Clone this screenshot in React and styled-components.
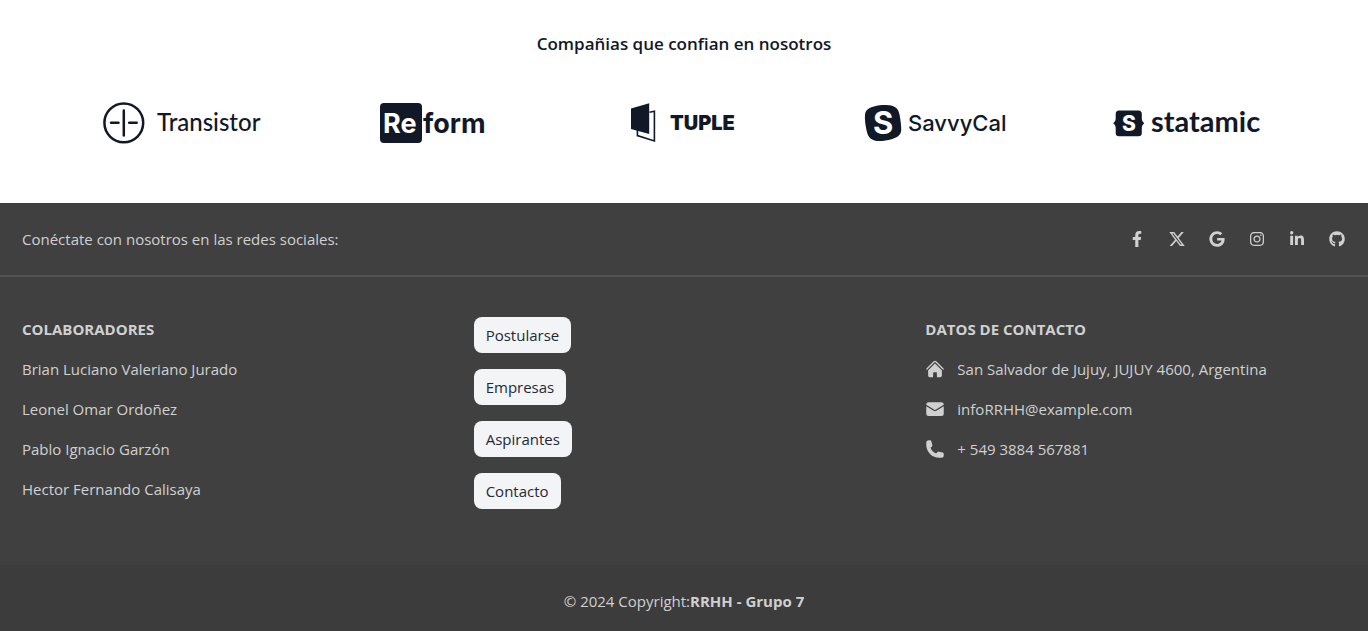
import React from "react";
import styled, { createGlobalStyle } from "styled-components";
import { FaFacebookF, FaGoogle, FaInstagram, FaLinkedinIn, FaGithub } from "react-icons/fa";

const GlobalStyle = createGlobalStyle`
  *, *::before, *::after { box-sizing: border-box; }
  body {
    margin: 0;
    background: #fff;
    font-family: "Segoe UI", "Open Sans", "Noto Sans", sans-serif;
    font-size: 15px;
    line-height: 24px;
  }
  h2, h6, p, ul { margin: 0; padding: 0; font-size: inherit; font-weight: inherit; }
  ul { list-style: none; }
  a { color: inherit; text-decoration: none; }
`;

const Companies = styled.section`
  padding: 28px 32px 56px;
`;

const CompaniesInner = styled.div`
  max-width: 1216px;
  margin: 0 auto;
`;

const CompaniesTitle = styled.h2`
  text-align: center;
  font-size: 17px;
  line-height: 32px;
  font-weight: 600;
  color: #111827;
`;

const LogoGrid = styled.div`
  display: grid;
  grid-template-columns: repeat(5, minmax(0, 1fr));
  gap: 40px;
  justify-items: center;
  margin-top: 39px;
`;

const Logo = styled.svg`
  display: block;
  width: 158px;
  height: 48px;
  fill: #111827;
`;

const Word = styled.text`
  font-family: ${(p) => p.$family || "Lato"}, sans-serif;
  font-weight: ${(p) => p.$weight};
  font-size: ${(p) => p.$size}px;
`;

const Footer = styled.footer`
  background: #404040;
  color: #d0d0d0;
`;

const SocialBar = styled.div`
  display: flex;
  align-items: center;
  justify-content: space-between;
  padding: 24px 22px;
  border-bottom: 2px solid #525252;
`;

const SocialLinks = styled.nav`
  display: flex;
  gap: 22px;
`;

const SocialLink = styled.a`
  display: flex;
  align-items: center;
  justify-content: center;
  width: 18px;
  height: 24px;

  svg { width: 16px; height: 16px; fill: currentColor; }
`;

const Columns = styled.div`
  display: grid;
  grid-template-columns: repeat(3, minmax(0, 1fr));
  gap: 32px;
  padding: 40px 23px 56px 22px;
`;

const ColumnTitle = styled.h6`
  margin-bottom: 16px;
  font-weight: 700;
  text-transform: uppercase;
`;

const Column = styled.div``;

const List = styled.ul`
  display: flex;
  flex-direction: column;
  align-items: flex-start;
  gap: 16px;
`;

const ContactItem = styled.li`
  display: flex;
  align-items: center;
  gap: 12px;

  svg { width: 20px; height: 20px; flex: none; fill: currentColor; }
`;

const NavButton = styled.button`
  display: block;
  border: 0;
  border-radius: 8px;
  padding: 6px 12px;
  background: #f3f4f6;
  color: #1f2937;
  font: inherit;
  cursor: pointer;
`;

const Copyright = styled.div`
  padding: 24px;
  background: #3c3c3c;
  text-align: center;

  a { font-weight: 700; }
`;

const XIcon = () => (
  <svg viewBox="16 16 480 480" aria-hidden="true">
    <path d="M389.2 48h70.6L305.6 224.2 487 464H345L233.7 318.6 106.5 464H35.8L200.7 275.5 26.8 48H172.4L272.9 180.9 389.2 48zM364.4 421.8h39.1L151.1 88h-42L364.4 421.8z" />
  </svg>
);

const HomeIcon = () => (
  <svg viewBox="0 0 24 24" aria-hidden="true">
    <path d="M11.47 3.84a.75.75 0 011.06 0l8.69 8.69a.75.75 0 101.06-1.06l-8.689-8.69a2.25 2.25 0 00-3.182 0l-8.69 8.69a.75.75 0 001.061 1.06l8.69-8.69z" />
    <path d="M12 5.432l8.159 8.159c.03.03.06.058.091.086v6.198c0 1.035-.84 1.875-1.875 1.875H15a.75.75 0 01-.75-.75v-4.5a.75.75 0 00-.75-.75h-3a.75.75 0 00-.75.75V21a.75.75 0 01-.75.75H5.625a1.875 1.875 0 01-1.875-1.875v-6.198a2.29 2.29 0 00.091-.086L12 5.43z" />
  </svg>
);

const MailIcon = () => (
  <svg viewBox="0 0 24 24" aria-hidden="true">
    <path d="M1.5 8.67v8.58a3 3 0 003 3h15a3 3 0 003-3V8.67l-8.928 5.493a3 3 0 01-3.144 0L1.5 8.67z" />
    <path d="M22.5 6.908V6.75a3 3 0 00-3-3h-15a3 3 0 00-3 3v.158l9.714 5.978a1.5 1.5 0 001.572 0L22.5 6.908z" />
  </svg>
);

const PhoneIcon = () => (
  <svg viewBox="0 0 24 24" aria-hidden="true">
    <path fillRule="evenodd" clipRule="evenodd" d="M1.5 4.5a3 3 0 013-3h1.372c.86 0 1.61.586 1.819 1.42l1.105 4.423a1.875 1.875 0 01-.694 1.955l-1.293.97c-.135.101-.164.249-.126.352a11.285 11.285 0 006.697 6.697c.103.038.25.009.352-.126l.97-1.293a1.875 1.875 0 011.955-.694l4.423 1.105c.834.209 1.42.959 1.42 1.82V19.5a3 3 0 01-3 3h-2.25C8.552 22.5 1.5 15.448 1.5 6.75V4.5z" />
  </svg>
);

const TransistorLogo = () => (
  <Logo viewBox="0 0 158 48" role="img" aria-label="Transistor">
    <g fill="none" stroke="#111827" strokeWidth="2.5" strokeLinecap="round">
      <circle cx="20.800" cy="23.8" r="19.4" />
      <path d="M20.800 11.500v25M8 23.8h7.500M26.200 23.8h7.500" />
    </g>
    <Word x="54" y="32" $weight={500} $size={24}>Transistor</Word>
  </Logo>
);

const ReformLogo = () => (
  <Logo viewBox="0 0 158 48" role="img" aria-label="Reform">
    <rect x="26" y="4" width="42" height="40" rx="4" />
    <Word x="29" y="34" fill="#fff" $family="Inter" $weight={700} $size={27}>Re</Word>
    <Word x="69" y="34" $family="Inter" $weight={700} $size={27}>form</Word>
  </Logo>
);

const TupleLogo = () => (
  <Logo viewBox="0 0 158 48" role="img" aria-label="Tuple">
    <path d="M26 9.600 44.200 4.200V35L26 30z" />
    <path d="M44.500 13.200 49.400 12.200V42L32.400 36.600V31" fill="none" stroke="#111827" strokeWidth="1.6" />
    <Word x="65" y="31" $family="Inter" $weight={900} $size={20}>TUPLE</Word>
  </Logo>
);

const SavvyCalLogo = () => (
  <Logo viewBox="0 0 158 48" role="img" aria-label="SavvyCal">
    <path d="M18 7.400C24 5.800 31 5.600 35 6.600C40 7.800 42.600 10.500 43.600 16C44.600 21.500 45.400 27 45.200 31.500C45 36 41 38.600 35.500 40.200C29.500 42 22.500 42.600 18.500 41.400C13.500 40 11.600 36.500 10.600 31.500C9.400 26 8.600 20.500 9 16C9.400 11 12.500 8.800 18 7.400Z" />
    <Word x="17" y="35" fill="#fff" $family="Inter" $weight={700} $size={31}>S</Word>
    <Word x="52" y="32" $family="Inter" $weight={500} $size={22}>SavvyCal</Word>
  </Logo>
);

const StatamicLogo = () => (
  <Logo viewBox="0 0 158 48" role="img" aria-label="Statamic">
    <path d="M12 11.500H31.500Q34.800 11.500 34.800 15V20Q34.800 22.500 37.200 24.300Q34.800 26 34.800 28.500V34Q34.800 37.300 31.500 37.300H12Q8.700 37.300 8.700 34V28.500Q8.700 26 6.300 24.300Q8.700 22.500 8.700 20V15Q8.700 11.500 12 11.500Z" />
    <Word x="15" y="32" fill="#fff" $family="Inter" $weight={800} $size={21}>S</Word>
    <Word x="44" y="33" $weight={700} $size={29}>statamic</Word>
  </Logo>
);

const socials = [
  ["Facebook", FaFacebookF],
  ["X", XIcon],
  ["Google", FaGoogle],
  ["Instagram", FaInstagram],
  ["LinkedIn", FaLinkedinIn],
  ["GitHub", FaGithub],
];

const collaborators = [
  "Brian Luciano Valeriano Jurado",
  "Leonel Omar Ordoñez",
  "Pablo Ignacio Garzón",
  "Hector Fernando Calisaya",
];

const sections = ["Postularse", "Empresas", "Aspirantes", "Contacto"];

export default function App() {
  return (
    <>
      <GlobalStyle />
      <Companies>
        <CompaniesInner>
          <CompaniesTitle>Compañias que confian en nosotros</CompaniesTitle>
          <LogoGrid>
            <TransistorLogo />
            <ReformLogo />
            <TupleLogo />
            <SavvyCalLogo />
            <StatamicLogo />
          </LogoGrid>
        </CompaniesInner>
      </Companies>
      <Footer>
        <SocialBar>
          <span>Conéctate con nosotros en las redes sociales:</span>
          <SocialLinks>
            {socials.map(([name, Icon]) => (
              <SocialLink key={name} href="#" aria-label={name}>
                <Icon />
              </SocialLink>
            ))}
          </SocialLinks>
        </SocialBar>
        <Columns>
          <Column>
            <ColumnTitle>Colaboradores</ColumnTitle>
            <List>
              {collaborators.map((name) => (
                <li key={name}><a href="#">{name}</a></li>
              ))}
            </List>
          </Column>
          <List>
            {sections.map((label) => (
              <li key={label}><NavButton type="button">{label}</NavButton></li>
            ))}
          </List>
          <Column>
            <ColumnTitle>Datos de contacto</ColumnTitle>
            <List>
              <ContactItem><HomeIcon />San Salvador de Jujuy, JUJUY 4600, Argentina</ContactItem>
              <ContactItem><MailIcon />infoRRHH@example.com</ContactItem>
              <ContactItem><PhoneIcon />+ 549 3884 567881</ContactItem>
            </List>
          </Column>
        </Columns>
        <Copyright>
          <span>© 2024 Copyright:</span>
          <a href="#">RRHH - Grupo 7</a>
        </Copyright>
      </Footer>
    </>
  );
}
